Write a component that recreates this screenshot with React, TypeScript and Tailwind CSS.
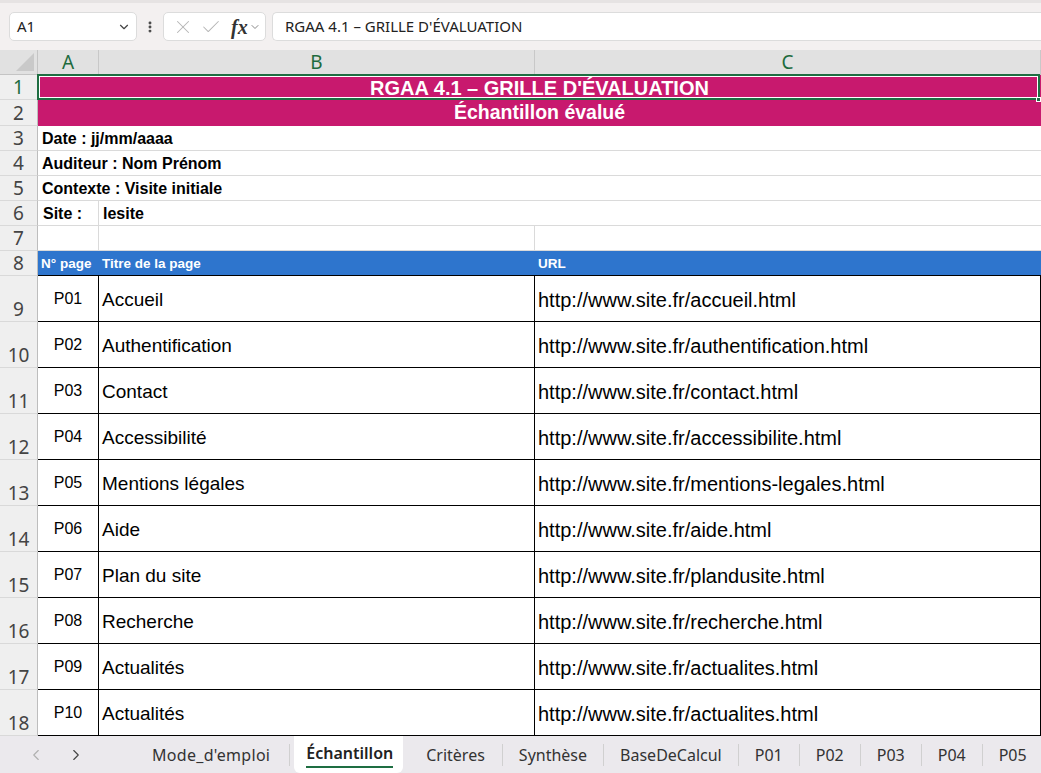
import { ChevronDown, ChevronLeft, ChevronRight, X, Check, EllipsisVertical } from "lucide-react";

const pages = [
  ["P01", "Accueil", "http://www.site.fr/accueil.html"],
  ["P02", "Authentification", "http://www.site.fr/authentification.html"],
  ["P03", "Contact", "http://www.site.fr/contact.html"],
  ["P04", "Accessibilité", "http://www.site.fr/accessibilite.html"],
  ["P05", "Mentions légales", "http://www.site.fr/mentions-legales.html"],
  ["P06", "Aide", "http://www.site.fr/aide.html"],
  ["P07", "Plan du site", "http://www.site.fr/plandusite.html"],
  ["P08", "Recherche", "http://www.site.fr/recherche.html"],
  ["P09", "Actualités", "http://www.site.fr/actualites.html"],
  ["P10", "Actualités", "http://www.site.fr/actualites.html"],
];

const tabsAfter = ["Synthèse", "BaseDeCalcul", "P01", "P02", "P03", "P04", "P05"];

function RowHead({ n, active }: { n: number; active?: boolean }) {
  return (
    <div
      className={`flex items-end justify-center border-b border-r border-b-[#d9d9d9] border-r-[#bdbdbd] bg-[#efefef] font-['Noto_Sans',sans-serif] text-[19px] leading-[24px] ${
        active ? "text-[#1d6b3d]" : "text-[#444]"
      }`}
    >
      {n}
    </div>
  );
}

function Sep() {
  return <div className="h-[22px] w-px shrink-0 bg-[#d0d0d0]" />;
}

export default function App() {
  return (
    <div className="flex h-[773px] w-[1041px] flex-col overflow-hidden bg-white font-['Liberation_Sans',Arial,sans-serif]">
      {/* formula bar */}
      <div className="flex h-[50px] shrink-0 items-center gap-[6px] border-t-[3px] border-[#e6e3e3] bg-[#f3f0f0] pl-[9px]">
        <div className="flex h-[29px] w-[128px] items-center justify-between rounded-[5px] border border-[#dcdcdc] bg-white pl-[7px] pr-[5px] font-['Noto_Sans',sans-serif] text-[15px] text-[#222]">
          <span>A1</span>
          <ChevronDown className="h-[14px] w-[14px] text-[#444]" strokeWidth={2} />
        </div>
        <EllipsisVertical className="h-[18px] w-[14px] text-[#444]" strokeWidth={3} />
        <div className="flex h-[29px] w-[103px] items-center rounded-[5px] border border-[#dcdcdc] bg-white pl-[8px]">
          <X className="h-[22px] w-[22px] text-[#b5b5b5]" strokeWidth={1.1} />
          <Check className="ml-[6px] h-[22px] w-[22px] text-[#b5b5b5]" strokeWidth={1.1} />
          <span className="ml-[9px] font-['Liberation_Serif',serif] text-[20px] font-bold italic leading-none text-[#333]">fx</span>
          <ChevronDown className="ml-[1px] h-[12px] w-[12px] text-[#888]" strokeWidth={2} />
        </div>
        <div className="flex h-[29px] flex-1 items-center rounded-l-[5px] border border-r-0 border-[#dcdcdc] bg-white pl-[12px] font-['Noto_Sans',sans-serif] text-[15px] text-[#222]">
          RGAA 4.1 – GRILLE D'ÉVALUATION
        </div>
      </div>

      {/* sheet */}
      <div className="relative grid flex-1 grid-cols-[38px_61px_436px_1fr] grid-rows-[25px_25px_26px_25px_25px_25px_25px_25px_25px_repeat(10,46px)] overflow-hidden">
        {/* column headers */}
        <div className="relative border-b border-r border-[#c4c4c4] bg-[#e1e1e1]">
          <div className="absolute bottom-[3px] right-[3px] h-0 w-0 border-b-[18px] border-l-[18px] border-b-[#c9c9c9] border-l-transparent" />
        </div>
        {["A", "B", "C"].map((c) => (
          <div
            key={c}
            className="flex items-center justify-center border-b border-r border-[#c8c8c8] bg-[#e1e1e1] font-['Noto_Sans',sans-serif] text-[19px] text-[#1d6b3d]"
          >
            {c}
          </div>
        ))}

        {/* row 1 */}
        <RowHead n={1} active />
        <div className="relative col-span-3 flex items-center justify-center bg-[#c8196e] pt-[1px] text-[20px] font-bold text-white">
          RGAA 4.1 – GRILLE D'ÉVALUATION
          <div className="absolute -left-[1px] -top-[1px] bottom-0 right-[1px] border-2 border-[#1e6e42]">
            <div className="h-full w-full border border-white" />
          </div>
          <div className="absolute -bottom-[2px] right-0 h-[5px] w-[5px] border border-white bg-[#1e6e42]" />
        </div>

        {/* row 2 */}
        <RowHead n={2} />
        <div className="col-span-3 flex items-center justify-center bg-[#c8196e] text-[19.5px] font-bold text-white">
          Échantillon évalué
        </div>

        {/* rows 3-5 */}
        {["Date : jj/mm/aaaa", "Auditeur : Nom Prénom", "Contexte : Visite initiale"].map((t, i) => (
          <div key={t} className="contents">
            <RowHead n={3 + i} />
            <div className="col-span-3 flex items-center border-b border-[#dadada] pl-[4px] pt-[1px] text-[16px] font-bold text-black">
              {t}
            </div>
          </div>
        ))}

        {/* row 6 */}
        <RowHead n={6} />
        <div className="flex items-center border-b border-r border-[#dadada] pl-[5px] pt-[1px] text-[16px] font-bold text-black">Site :</div>
        <div className="col-span-2 flex items-center border-b border-[#dadada] pl-[4px] pt-[1px] text-[16px] font-bold text-black">lesite</div>

        {/* row 7 */}
        <RowHead n={7} />
        <div className="border-b border-r border-[#dadada]" />
        <div className="border-b border-r border-[#dadada]" />
        <div className="border-b border-[#dadada]" />

        {/* row 8 */}
        <RowHead n={8} />
        {["N° page", "Titre de la page", "URL"].map((t) => (
          <div key={t} className="flex items-end border-b border-black bg-[#2e75cd] pb-[1px] pl-[3px] text-[13.5px] font-bold text-white">
            {t}
          </div>
        ))}

        {/* data rows */}
        {pages.map(([id, title, url], i) => (
          <div key={id} className="contents">
            <RowHead n={9 + i} />
            <div className="flex items-center justify-center border-b border-r border-black pt-[1px] text-[16px] text-black">{id}</div>
            <div className="flex items-center border-b border-r border-black pl-[3px] pt-[3px] text-[19px] text-black">{title}</div>
            <div className="flex items-center border-b border-r border-black pl-[3px] pt-[3px] text-[20px] text-black">{url}</div>
          </div>
        ))}
      </div>

      {/* sheet tabs */}
      <div className="flex h-[37px] shrink-0 items-center overflow-hidden whitespace-nowrap bg-[#ebe9ed] font-['Noto_Sans',sans-serif] text-[16px] text-[#333]">
        <ChevronLeft className="ml-[27px] h-[18px] w-[18px] shrink-0 text-[#b0b0b0]" strokeWidth={1.5} />
        <ChevronRight className="ml-[22px] h-[18px] w-[18px] shrink-0 text-[#444]" strokeWidth={1.5} />
        <span className="ml-[67px] shrink-0 pr-[19px] tracking-[0.3px]">Mode_d'emploi</span>
        <Sep />
        <div className="ml-[4px] flex h-full shrink-0 items-center rounded-b-[6px] bg-white pl-[12px] pr-[10px]">
          <span className="border-b-2 border-[#1e6e42] pb-[1px] font-semibold text-[#222]">Échantillon</span>
        </div>
        <span className="shrink-0 pl-[23px] pr-[17px]">Critères</span>
        {tabsAfter.map((t) => (
          <div key={t} className="flex h-full shrink-0 items-center">
            <Sep />
            <span className="px-[16px]">{t}</span>
          </div>
        ))}
      </div>
    </div>
  );
}
